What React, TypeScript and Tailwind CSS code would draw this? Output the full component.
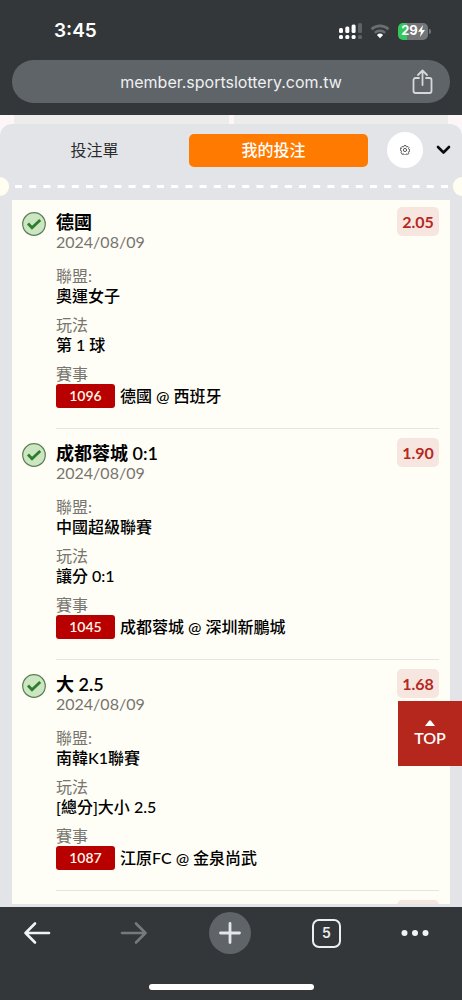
import React, { FC } from "react";

type Bet = {
  pick: string;
  date: string;
  odds: string;
  league: string;
  play: string;
  code: string;
  match: string;
};

const bets: Bet[] = [
  {
    pick: "德國",
    date: "2024/08/09",
    odds: "2.05",
    league: "奧運女子",
    play: "第 1 球",
    code: "1096",
    match: "德國 @ 西班牙",
  },
  {
    pick: "成都蓉城 0:1",
    date: "2024/08/09",
    odds: "1.90",
    league: "中國超級聯賽",
    play: "讓分 0:1",
    code: "1045",
    match: "成都蓉城 @ 深圳新鵬城",
  },
  {
    pick: "大 2.5",
    date: "2024/08/09",
    odds: "1.68",
    league: "南韓K1聯賽",
    play: "[總分]大小 2.5",
    code: "1087",
    match: "江原FC @ 金泉尚武",
  },
];

const StatusBar: FC = () => (
  <div className="flex h-[60px] items-center justify-between pr-[31px] pl-[54px] pt-0.5 font-['Inter',sans-serif] text-white">
    <time className="text-[19px] font-semibold">3:45</time>
    <div className="flex items-center gap-2">
      <svg width="23" height="17" viewBox="0 0 23 17" fill="#fff" aria-hidden="true">
        <rect x="0" y="5" width="4" height="5" rx="1.5" />
        <rect x="6.3" y="3.5" width="4" height="6.5" rx="1.5" />
        <rect x="12.6" y="1.5" width="4" height="8.5" rx="1.5" />
        <rect x="19" y="0" width="4" height="10" rx="1.5" fill="#5f6365" />
        <rect x="0" y="12" width="4" height="4" rx="1.5" />
        <rect x="6.3" y="12" width="4" height="4" rx="1.5" />
        <rect x="12.6" y="12" width="4" height="4" rx="1.5" />
        <rect x="19" y="12" width="4" height="4" rx="1.5" fill="#5f6365" />
      </svg>
      <svg width="20" height="15" viewBox="0 0 20 15" fill="none" aria-hidden="true">
        <path d="M1.5 5.2a12.4 12.4 0 0 1 17 0" stroke="#6a6e70" strokeWidth="2.6" />
        <path d="M4.8 8.8a7.6 7.6 0 0 1 10.4 0" stroke="#6a6e70" strokeWidth="2.4" />
        <path d="M10 14.2 6.9 11a4.6 4.6 0 0 1 6.2 0z" fill="#fff" />
      </svg>
      <div className="flex items-center gap-px">
        <div className="flex h-[17px] w-[30px] items-center justify-center rounded-[5px] bg-linear-to-r from-[#35c759] from-30% to-[#737678] to-30% text-[13px] font-bold">
          29
          <svg width="7" height="12" viewBox="0 0 7 12" fill="#fff" aria-hidden="true">
            <path d="M5 0 0 6.8h3L2 12l5-7H4z" />
          </svg>
        </div>
        <span className="h-[5px] w-0.5 rounded-r-sm bg-[#737678]" />
      </div>
    </div>
  </div>
);

const AddressBar: FC = () => (
  <div className="mx-3 flex h-[43px] items-center rounded-full bg-[#5f6468] pr-[17px] pl-[38px] font-['Inter',sans-serif] text-[#eef0f1]">
    <span className="flex-1 text-center text-base">
      member.sportslottery.com.tw
    </span>
    <button type="button" aria-label="分享">
      <svg
        width="21"
        height="26"
        viewBox="0 0 21 26"
        fill="none"
        stroke="#d6d8da"
        strokeWidth="1.8"
        strokeLinecap="round"
        strokeLinejoin="round"
      >
        <path d="M7 9H3.5A2 2 0 0 0 1.5 11v11a2 2 0 0 0 2 2h14a2 2 0 0 0 2-2V11a2 2 0 0 0-2-2H14" />
        <path d="M10.5 16V2M6 6l4.5-4.5L15 6" />
      </svg>
    </button>
  </div>
);

const PanelHeader: FC = () => (
  <div className="flex items-center pt-2 pr-[11px] pl-2.5">
    <button type="button" className="h-[33px] flex-1 pr-2.5 text-base text-[#2b2b2d]">
      投注單
    </button>
    <button
      type="button"
      className="h-[33px] flex-1 rounded-[5px] bg-[#ff7a00] pr-2.5 text-base font-medium text-white"
    >
      我的投注
    </button>
    <button
      type="button"
      aria-label="設定"
      className="ml-[19px] flex size-9 items-center justify-center rounded-full bg-white"
    >
      <svg width="10" height="10" viewBox="0 0 20 20" fill="none" stroke="#333" strokeWidth="1.6">
        <path
          strokeLinejoin="round"
          d="M8.4 1h3.2l.6 2.2 1.5.7 2.1-1 2.2 2.2-1 2 .7 1.6 2 .6v3l-2 .6-.7 1.6 1 2-2.2 2.2-2.1-1-1.5.7-.6 2H8.4l-.6-2-1.5-.7-2.1 1L2 14.5l1-2-.7-1.6-2-.6v-3l2-.6L3 7.1l-1-2L4.2 2.9l2.1 1 1.5-.7z"
        />
        <circle cx="10" cy="10" r="3.2" />
      </svg>
    </button>
    <button type="button" aria-label="收合" className="ml-[13px]">
      <svg
        width="15"
        height="10"
        viewBox="0 0 15 10"
        fill="none"
        stroke="#0b0b0b"
        strokeWidth="2.6"
        strokeLinecap="round"
        strokeLinejoin="round"
      >
        <path d="m2 2 5.5 5.5L13 2" />
      </svg>
    </button>
  </div>
);

const TicketPerforation: FC = () => (
  <div className="mt-[9px] flex h-[19px] items-center justify-between">
    <span className="h-[19px] w-[9px] rounded-r-full bg-[#fffef0]" />
    <svg className="mx-[5px] h-[3px] flex-1" aria-hidden="true">
      <line
        x1="1"
        y1="1.5"
        x2="100%"
        y2="1.5"
        stroke="#fff"
        strokeWidth="3"
        strokeDasharray="7 7.2"
      />
    </svg>
    <span className="h-[19px] w-[9px] rounded-l-full bg-[#fffef0]" />
  </div>
);

const WinIcon: FC = () => (
  <svg width="24" height="24" viewBox="0 0 24 24" fill="none" aria-label="中獎">
    <circle cx="12" cy="12" r="11.3" fill="#cbe6c0" stroke="#5b7f55" strokeWidth="1.2" />
    <path d="m6 11.5 4 4.2L18.2 8" stroke="#2f7d2b" strokeWidth="2.8" />
  </svg>
);

const BetItem: FC<{ bet: Bet }> = ({ bet }) => (
  <li className="flex gap-2.5 pt-[9px] pr-[11px] pl-2.5 first:pt-[7px]">
    <div className="pt-[5px]">
      <WinIcon />
    </div>
    <div className="flex-1 border-b border-[#e6e4df] pb-5">
      <div className="flex items-start justify-between">
        <div className="pt-[3px]">
          <h2 className="text-lg leading-6 font-semibold text-black">{bet.pick}</h2>
          <p className="leading-4 text-[#77756f]">{bet.date}</p>
        </div>
        <span className="flex h-[29px] w-[42px] items-center justify-center rounded-[5px] bg-[#f7e6df] font-bold text-[#b5281f]">
          {bet.odds}
        </span>
      </div>
      <dl className="mt-4 flex flex-col gap-[9px] leading-5">
        <div>
          <dt className="text-[#77756f]">聯盟:</dt>
          <dd className="font-medium text-black">{bet.league}</dd>
        </div>
        <div>
          <dt className="text-[#77756f]">玩法</dt>
          <dd className="font-medium text-black">{bet.play}</dd>
        </div>
        <div>
          <dt className="text-[#77756f]">賽事</dt>
          <dd className="flex items-center gap-[5px] font-medium text-black">
            <span className="flex h-6 w-[59px] items-center justify-center rounded-[3px] bg-[#b80000] text-sm font-semibold text-[#fff6e8]">
              {bet.code}
            </span>
            {bet.match}
          </dd>
        </div>
      </dl>
    </div>
  </li>
);

const Toolbar: FC = () => (
  <nav className="flex h-[93px] shrink-0 flex-col items-center justify-between bg-[#343739] pt-1 pb-2.5 font-['Inter',sans-serif]">
    <div className="flex w-full items-center justify-between pr-[33px] pl-[15px]">
      <button type="button" aria-label="上一頁" className="flex size-11 items-center justify-center">
        <svg width="28" height="24" viewBox="0 0 28 24" fill="none" stroke="#f1f2f3" strokeWidth="2.6" strokeLinecap="round" strokeLinejoin="round">
          <path d="M26 12H2.5M12 2.5 2.5 12 12 21.5" />
        </svg>
      </button>
      <button type="button" aria-label="下一頁" className="flex size-11 items-center justify-center">
        <svg width="28" height="24" viewBox="0 0 28 24" fill="none" stroke="#77797b" strokeWidth="2.6" strokeLinecap="round" strokeLinejoin="round">
          <path d="M2 12h23.5M16 2.5l9.5 9.5-9.5 9.5" />
        </svg>
      </button>
      <button type="button" aria-label="新分頁" className="flex size-11 items-center justify-center rounded-full">
        <svg width="42" height="42" viewBox="0 0 42 42" fill="none" stroke="#e4e6e7" strokeWidth="2.8" strokeLinecap="round">
          <circle cx="21" cy="21" r="21" fill="#5f6468" stroke="none" />
          <path d="M21 11.5v19M11.5 21h19" />
        </svg>
      </button>
      <button type="button" aria-label="分頁" className="flex size-11 items-center justify-center">
        <span className="flex size-[29px] items-center justify-center rounded-[7px] border-2 border-[#eceeef] text-sm font-semibold text-[#eceeef]">
          5
        </span>
      </button>
      <button type="button" aria-label="更多" className="flex h-11 w-7 items-center justify-center">
        <svg width="28" height="6" viewBox="0 0 28 6" fill="#f1f2f3">
          <circle cx="3.5" cy="3" r="3" />
          <circle cx="14" cy="3" r="3" />
          <circle cx="24.5" cy="3" r="3" />
        </svg>
      </button>
    </div>
    <div className="h-1.5 w-[165px] rounded-full bg-white" />
  </nav>
);

const App: FC = () => {
  const scrollTop = () => window.scrollTo({ top: 0, behavior: "smooth" });

  return (
    <div className="flex h-screen flex-col overflow-hidden bg-[#fdf6f8] font-['Lato','Noto_Sans_CJK_TC',sans-serif]">
      <header className="shrink-0 bg-[#343739] pb-3">
        <StatusBar />
        <AddressBar />
      </header>
      <div className="flex h-[9px] shrink-0 gap-[5px] px-3.5">
        <div className="flex-1 bg-[#ececec]" />
        <div className="flex-1 bg-[#ececec]" />
      </div>
      <main className="flex min-h-0 flex-1 flex-col rounded-t-xl bg-[#e3e4e8]">
        <PanelHeader />
        <TicketPerforation />
        <ul className="mx-3 mt-1 mb-[3px] min-h-0 flex-1 overflow-hidden bg-[#fffef6]">
          {bets.map((bet) => (
            <BetItem key={bet.code} bet={bet} />
          ))}
          <li className="flex justify-end pt-[9px] pr-[11px]">
            <span className="h-[29px] w-[42px] rounded-[5px] bg-[#f7e6df]" />
          </li>
        </ul>
      </main>
      <button
        type="button"
        onClick={scrollTop}
        className="fixed right-0 bottom-[234px] flex h-[65px] w-16 flex-col items-center justify-center bg-[#b5261c] pt-0.5 text-white"
      >
        <svg width="10" height="6" viewBox="0 0 10 6" fill="#fff" aria-hidden="true">
          <path d="M0 6 4 .7q1-1 2 0L10 6z" />
        </svg>
        <span className="text-base leading-6 font-semibold">TOP</span>
      </button>
      <Toolbar />
    </div>
  );
};

export default App;
